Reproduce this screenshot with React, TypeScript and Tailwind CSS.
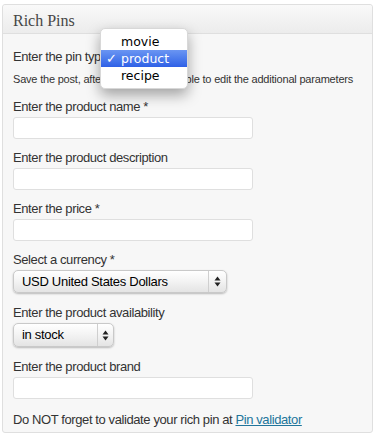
import React from "react";

function Arrows() {
  return (
    <svg width="7" height="11" viewBox="0 0 7 11" className="block">
      <path d="M3.5 0.5 L6.5 4.5 L0.5 4.5 Z" fill="#222" />
      <path d="M3.5 10.5 L6.5 6.5 L0.5 6.5 Z" fill="#222" />
    </svg>
  );
}

function Select({ value, width, divider, height }: { value: string; width: string; divider: string; height: string }) {
  return (
    <div
      className={`${width} ${height} mt-[2px] flex rounded-[5px] border border-[#c9c9c9] bg-gradient-to-b from-[#ffffff] via-[#f3f3f3] to-[#e4e4e4] shadow-[0_1px_2px_rgba(0,0,0,0.25)]`}
    >
      <div className={`${divider} flex items-center pl-[8px] text-[13px] tracking-[-0.3px] text-black border-r border-[#cfcfcf]`}>
        {value}
      </div>
      <div className="flex flex-1 items-center justify-center">
        <Arrows />
      </div>
    </div>
  );
}

function Input() {
  return <div className="mt-[2px] h-[22px] w-[240px] rounded-[3px] border border-[#dfdfdf] bg-white" />;
}

function Label({ children, mt }: { children: React.ReactNode; mt: string }) {
  return <div className={`${mt} text-[13px] leading-[16px] tracking-[-0.4px] text-[#333]`}>{children}</div>;
}

export default function App() {
  return (
    <div className="bg-white w-[373px] h-[434px] pl-[2px] pt-[4px]" style={{ fontFamily: '"Liberation Sans", Arial, sans-serif' }}>
      <div className="relative w-[371px] h-[429px] rounded-[3px] border border-[#dfdfdf] bg-[#f7f7f7] overflow-visible">
        <div className="h-[29px] border-b border-[#dfdfdf] bg-gradient-to-b from-[#f9f9f9] to-[#ececec] pl-[10px] pt-[4px] rounded-t-[3px]">
          <span className="text-[16px] leading-[20px] text-[#464646]" style={{ fontFamily: '"Liberation Serif", Georgia, serif' }}>
            Rich Pins
          </span>
        </div>
        <div className="pl-[10px] pt-[15px]">
          <div className="text-[13px] leading-[16px] tracking-[-0.4px] text-[#333]">Enter the pin type</div>
          <div className="mt-[7px] text-[11px] leading-[14px] tracking-[-0.2px] text-[#333]">
            Save the post, after that you will be able to edit the additional parameters
          </div>
          <Label mt="mt-[13px]">Enter the product name *</Label>
          <Input />
          <Label mt="mt-[11px]">Enter the product description</Label>
          <Input />
          <Label mt="mt-[11px]">Enter the price *</Label>
          <Input />
          <Label mt="mt-[11px]">Select a currency *</Label>
          <Select value="USD United States Dollars" width="w-[214px]" divider="w-[195px]" height="h-[23px]" />
          <Label mt="mt-[12px]">Enter the product availability</Label>
          <Select value="in stock" width="w-[101px]" divider="w-[84px]" height="h-[24px]" />
          <Label mt="mt-[12px]">Enter the product brand</Label>
          <Input />
          <div className="mt-[13px] text-[13px] leading-[16px] tracking-[-0.4px] text-[#333]">
            Do NOT forget to validate your rich pin at{" "}
            <a href="#" className="text-[#21759b] underline">
              Pin validator
            </a>
          </div>
        </div>

        <div
          className="absolute left-[97px] top-[23px] w-[88px] rounded-[5px] bg-white py-[4px] shadow-[0_6px_14px_rgba(0,0,0,0.35)] border border-[#d8d8d8]"
          style={{ fontFamily: '"DejaVu Sans", "Lucida Grande", sans-serif' }}
        >
          <div className="h-[17px] pl-[20px] text-[12.5px] leading-[17px] text-black">movie</div>
          <div className="relative h-[17px] pl-[20px] text-[12.5px] leading-[17px] text-white bg-gradient-to-b from-[#6a95f2] to-[#2f60e6]">
            <span className="absolute left-[5px] top-0 text-[13px] font-bold leading-[17px]">✓</span>
            product
          </div>
          <div className="h-[17px] pl-[20px] text-[12.5px] leading-[17px] text-black">recipe</div>
        </div>
      </div>
    </div>
  );
}
